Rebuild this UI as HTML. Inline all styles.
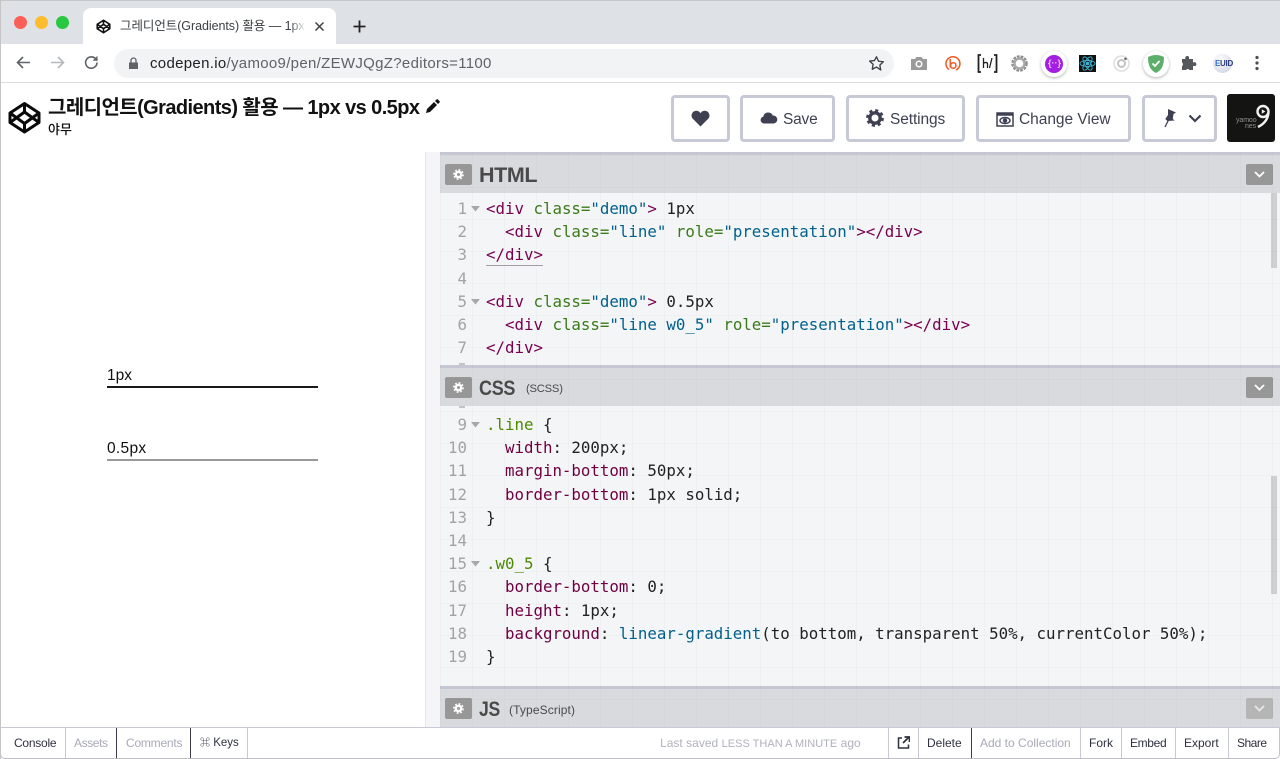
<!DOCTYPE html>
<html><head><meta charset="utf-8">
<style>
*{box-sizing:border-box}
html,body{margin:0;padding:0;width:1280px;height:759px;overflow:hidden;background:#fff;font-family:"Liberation Sans","Noto Sans CJK KR",sans-serif}
.a{position:absolute}
.t{position:absolute;white-space:nowrap}
.btn{position:absolute;top:95px;height:47px;border:3px solid #c7c9d6;border-radius:4px;background:#fff;color:#3f4152;font-size:15.5px;line-height:43px;white-space:nowrap;letter-spacing:-.2px}
.btn svg{position:absolute}
.code{position:absolute;font-family:"DejaVu Sans Mono",monospace;font-size:15.78px;line-height:23.2px;white-space:pre;color:#222}
.n{position:absolute;font-family:"DejaVu Sans Mono",monospace;font-size:15.78px;line-height:23.2px;color:#a3a3a3;text-align:right;width:28px;left:439px}
.tg{color:#7a004f}.at{color:#3a7a1a}.st{color:#00618c}.pr{color:#6f0040}.sel{color:#4d8a00}.fn{color:#00618c}
.eh{position:absolute;left:440px;width:840px;background:#d9dadd;border-top:3px solid #c5c7d4}
.cog{position:absolute;left:445px;width:27px;height:21px;background:#979797;border-radius:2px}
.cog svg{position:absolute;left:7px;top:4px}
.dd{position:absolute;left:1246px;width:27px;height:21px;background:#979797;border-radius:2px}
.ft{position:absolute;top:728px;height:30px;line-height:30px;font-size:12px;color:#2f3140;white-space:nowrap}
.sep{position:absolute;top:728px;height:30px;width:1px;background:#c7c9d6}
.lab{position:absolute;font-size:21.5px;font-weight:bold;color:#4a4a4a;letter-spacing:-.4px;white-space:nowrap;transform-origin:0 50%}
.sub{position:absolute;font-size:12px;color:#4a4a4a;white-space:nowrap}
</style></head><body>

<!-- Browser chrome -->
<div class="a" style="left:0;top:0;width:1280px;height:44px;background:#dee1e6;border-top:1px solid #c6c7ca"></div>
<div class="a" style="left:14px;top:16px;width:13px;height:13px;border-radius:50%;background:#fb5f57"></div>
<div class="a" style="left:35px;top:16px;width:13px;height:13px;border-radius:50%;background:#fdbc2e"></div>
<div class="a" style="left:56px;top:16px;width:13px;height:13px;border-radius:50%;background:#28c83f"></div>
<div class="a" style="left:83px;top:8px;width:253px;height:36px;background:#fff;border-radius:8px 8px 0 0"></div>
<svg class="a" style="left:96px;top:19px" width="15" height="15" viewBox="0 0 24 24" fill="none" stroke="#111" stroke-width="2.600" stroke-linejoin="round"><path d="M12 2 22 8.500v7L12 22 2 15.500v-7zM12 2v6.500M12 15.500V22M2 8.500l10 7 10-7M2 15.500l10-7 10 7"/></svg>
<div class="t" style="left:120px;top:18px;font-size:12.500px;line-height:17px;color:#3c4043;width:186px;overflow:hidden;letter-spacing:-.06px;-webkit-mask-image:linear-gradient(to right,#000 170px,transparent 186px)">그레디언트(Gradients) 활용 — 1px vs 0.5px</div>
<svg class="a" style="left:313px;top:20px" width="13" height="13" viewBox="0 0 13 13" stroke="#3c4043" stroke-width="1.500"><path d="M2.500 2.500l8 8M10.500 2.500l-8 8"/></svg>
<svg class="a" style="left:352px;top:19px" width="15" height="15" viewBox="0 0 15 15" stroke="#222" stroke-width="1.800"><path d="M7.500 1.500v12M1.500 7.500h12"/></svg>

<div class="a" style="left:0;top:44px;width:1280px;height:39px;background:#fff;border-bottom:1px solid #dadce0"></div>
<svg class="a" style="left:15px;top:54px" width="17" height="17" viewBox="0 0 17 17" fill="none" stroke="#5f6368" stroke-width="1.600"><path d="M15 8.500H2.500M8 3 2.500 8.500 8 14"/></svg>
<svg class="a" style="left:49px;top:54px" width="17" height="17" viewBox="0 0 17 17" fill="none" stroke="#b5b7ba" stroke-width="1.600"><path d="M2 8.500h12.500M9 3l5.500 5.500L9 14"/></svg>
<svg class="a" style="left:83px;top:54px" width="17" height="17" viewBox="0 0 17 17" fill="none" stroke="#5f6368" stroke-width="1.600"><path d="M14 8.500a5.700 5.700 0 1 1-1.700-4L14.500 6.500"/><path d="M14.500 1.800v4.900H9.600" fill="#5f6368" stroke="none"/></svg>
<div class="a" style="left:114px;top:49px;width:780px;height:29px;border-radius:15px;background:#f1f3f4"></div>
<svg class="a" style="left:128px;top:57px" width="11" height="13" viewBox="0 0 11 13"><path d="M1 5.500h9V12H1z" fill="#5f6368"/><path d="M3 5.500V3.500a2.500 2.500 0 0 1 5 0v2" fill="none" stroke="#5f6368" stroke-width="1.300"/></svg>
<div class="t" style="left:150px;top:55px;font-size:15px;line-height:18px;color:#202124;letter-spacing:.31px">codepen.io<span style="color:#5f6368">/yamoo9/pen/ZEWJQgZ?editors=1100</span></div>
<svg class="a" style="left:868px;top:55px" width="17" height="17" viewBox="0 0 24 24" fill="none" stroke="#3c4043" stroke-width="1.900" stroke-linejoin="round"><path d="M12 2.500l2.900 6.300 6.800.8-5 4.700 1.300 6.800L12 17l-6 3.100 1.300-6.800-5-4.700 6.800-.8z"/></svg>

<!-- extensions -->
<svg class="a" style="left:911px;top:56px" width="16" height="15" viewBox="0 0 16 15"><path d="M0 3h4l1.500-2h5L12 3h4v11H0z" fill="#9a9a9a"/><circle cx="8" cy="8" r="3.500" fill="#fff"/><circle cx="8" cy="8" r="2" fill="#9a9a9a"/></svg>
<svg class="a" style="left:944px;top:55px" width="17" height="17" viewBox="0 0 17 17" fill="none" stroke="#ec5a24" stroke-width="1.500"><path d="M5 14.500A7 7 0 1 1 12 15"/><path d="M6.300 4v8.500"/><circle cx="9.300" cy="10.500" r="2.700"/></svg>
<svg class="a" style="left:977px;top:54px" width="21" height="19" viewBox="0 0 21 19" fill="none" stroke="#222" stroke-width="1.800"><path d="M4 1H1.500v17H4M17 1h2.500v17H17"/><path d="M6.500 4v10M6.500 9.500c1-1.500 4-1.500 4 .5v4M15 4l-2.500 10" stroke-width="1.300"/></svg>
<svg class="a" style="left:1011px;top:55px" width="17" height="17" viewBox="0 0 17 17"><circle cx="8.500" cy="8.500" r="6.500" fill="none" stroke="#8d8d8d" stroke-width="3.500" stroke-dasharray="2.500 1"/><circle cx="8.500" cy="8.500" r="5" fill="none" stroke="#a9a9a9" stroke-width="2.400"/><circle cx="8.500" cy="8.500" r="2" fill="#fff"/></svg>
<div class="a" style="left:1041px;top:51px;width:26px;height:26px;border-radius:50%;background:#fff;box-shadow:0 1px 3px rgba(0,0,0,.3)"></div>
<div class="a" style="left:1045px;top:55px;width:18px;height:18px;border-radius:50%;background:#a31de2"></div>
<div class="t" style="left:1048px;top:57px;font:bold 9px/13px 'Liberation Sans',sans-serif;color:#e8c8f8">{··}</div>
<div class="a" style="left:1079px;top:55px;width:17px;height:17px;background:#111"></div>
<svg class="a" style="left:1079px;top:55px" width="17" height="17" viewBox="0 0 17 17" fill="none" stroke="#3fb6d8" stroke-width=".9"><ellipse cx="8.500" cy="8.500" rx="7.500" ry="3"/><ellipse cx="8.500" cy="8.500" rx="7.500" ry="3" transform="rotate(60 8.500 8.500)"/><ellipse cx="8.500" cy="8.500" rx="7.500" ry="3" transform="rotate(120 8.500 8.500)"/><circle cx="8.500" cy="8.500" r="1.300" fill="#3fb6d8"/></svg>
<svg class="a" style="left:1113px;top:55px" width="17" height="17" viewBox="0 0 17 17" fill="none"><circle cx="8.500" cy="8.500" r="7.500" stroke="#dedede" stroke-width="1.500"/><circle cx="8.500" cy="8.500" r="3.500" stroke="#c4c4c4" stroke-width="2"/><circle cx="12.500" cy="3.800" r="1.300" fill="#666"/></svg>
<div class="a" style="left:1143px;top:51px;width:26px;height:26px;border-radius:50%;background:#fff;box-shadow:0 1px 3px rgba(0,0,0,.3)"></div>
<svg class="a" style="left:1147px;top:54px" width="18" height="20" viewBox="0 0 18 20"><path d="M9 1C6 1 3 2 1 3c0 8 2 13 8 16 6-3 8-8 8-16C15 2 12 1 9 1z" fill="#5cae6a"/><path d="M5.500 9.500 8 12l4.500-5" fill="none" stroke="#fff" stroke-width="1.800"/></svg>
<svg class="a" style="left:1181px;top:55px" width="16" height="16" viewBox="0 0 16 16"><path d="M1 4h3.500a2 2 0 0 1 3.500-2v2h4v3.500a2 2 0 0 1 2.500 3.500H12v4H8.500a2 2 0 0 0-3.500 0H1v-4a2 2 0 0 0 0-3.500z" fill="#55585c"/></svg>
<div class="a" style="left:1213px;top:54px;width:19px;height:19px;border-radius:50%;background:radial-gradient(circle at 40% 30%,#fff,#c9cde0)"></div>
<div class="t" style="left:1215px;top:58px;font:bold 8px/11px 'Liberation Sans',sans-serif;color:#2b3a7a;letter-spacing:-.3px"><span style="color:#2d6fd0">E</span>UID</div>
<svg class="a" style="left:1255px;top:55px" width="4" height="16" viewBox="0 0 4 16" fill="#4a4d51"><circle cx="2" cy="2.500" r="1.600"/><circle cx="2" cy="8" r="1.600"/><circle cx="2" cy="13.500" r="1.600"/></svg>

<!-- CodePen header -->
<svg class="a" style="left:8px;top:101px" width="33" height="33" viewBox="0 0 33 33" fill="none" stroke="#0a0a0a" stroke-width="3" stroke-linejoin="round"><path d="M16.500 2.500 31 12v9.500L16.500 31 2 21.500V12zM16.500 2.500V11M16.500 22.500V31M2 12l14.500 10.500L31 12M2 21.500 16.500 11 31 21.500"/></svg>
<div class="t" style="left:48px;top:95px;font-size:20px;line-height:26px;font-weight:bold;color:#111;letter-spacing:-.58px">그레디언트(Gradients) 활용 — 1px vs 0.5px</div>
<svg class="a" style="left:425px;top:99px" width="15" height="15" viewBox="0 0 15 15" fill="#111"><path d="M1 14l1-4 7-7 3 3-7 7zM10 2l1.500-1.500a1 1 0 0 1 1.400 0l1.600 1.600a1 1 0 0 1 0 1.400L13 5z"/></svg>
<div class="t" style="left:48px;top:121px;font-size:13px;line-height:17px;font-weight:500;color:#111">야무</div>

<div class="btn" style="left:671px;width:59px"><svg style="left:17px;top:12px" width="19" height="17" viewBox="0 0 19 17" fill="#3f4152"><path d="M9.500 16.500 1.800 8.800A4.800 4.800 0 0 1 5.200 .8c1.800 0 3.300.9 4.300 2.400C10.500 1.700 12 .8 13.800 .8a4.800 4.800 0 0 1 3.400 8z"/></svg></div>
<div class="btn" style="left:740px;width:95px"><svg style="left:17px;top:13px" width="18" height="13" viewBox="0 0 18 13" fill="#3f4152"><path d="M4 12.500a3.500 3.500 0 0 1-.7-6.900A5 5 0 0 1 12.800 4.500a4 4 0 0 1 .9 8z"/></svg><span style="position:absolute;left:40px">Save</span></div>
<div class="btn" style="left:846px;width:119px"><svg style="left:17px;top:11px" width="18" height="18" viewBox="0 0 18 18"><circle cx="9" cy="9" r="5.200" fill="none" stroke="#3f4152" stroke-width="3.400"/><circle cx="9" cy="9" r="7.400" fill="none" stroke="#3f4152" stroke-width="3" stroke-dasharray="3 2.800"/></svg><span style="position:absolute;left:41px;letter-spacing:-.1px">Settings</span></div>
<div class="btn" style="left:976px;width:155px"><svg style="left:17px;top:14px" width="18" height="15" viewBox="0 0 18 15" fill="none" stroke="#3f4152" stroke-width="1.500"><path d="M1 1h16v13H1z"/><path d="M1 2.500h16" stroke-width="2.500"/><ellipse cx="9" cy="8.500" rx="5" ry="3"/><circle cx="9" cy="8.500" r="1.500" fill="#3f4152"/></svg><span style="position:absolute;left:40px;letter-spacing:-.03px">Change View</span></div>
<div class="btn" style="left:1142px;width:75px"><svg style="left:17px;top:10px" width="16" height="20" viewBox="0 0 16 20" fill="#3f4152"><path d="M6 1l8 3.500-2.500 1.500-.7 5 2 1.500-7.500.5-2-2L6 7z"/><path d="M6.500 12 3 19" stroke="#3f4152" stroke-width="1.300"/></svg><svg style="left:43px;top:16px" width="14" height="9" viewBox="0 0 14 9" fill="none" stroke="#3f4152" stroke-width="2.200"><path d="M1.500 1.500 7 7l5.500-5.500"/></svg></div>
<div class="a" style="left:1227px;top:94px;width:48px;height:48px;background:#141413;border-radius:3px"></div>
<svg class="a" style="left:1255px;top:103px" width="17" height="26" viewBox="0 0 17 26" fill="none" stroke="#f2f2f2" stroke-width="2.400"><circle cx="8" cy="8.500" r="5.500"/><path d="M13.500 9.500C13 16 9 21 3 24"/><path d="M6.800 6.200v4.600l3.600-2.300z" fill="#f2f2f2" stroke="none"/></svg>
<div class="t" style="left:1236px;top:118px;font:7px/6px 'Liberation Sans',sans-serif;color:#8f8f8f;letter-spacing:-.1px">yamoo<br><span style="margin-left:9px">nes</span></div>

<!-- Window edge / preview pane -->
<div class="a" style="left:0;top:0;width:1px;height:759px;background:#c5c5c5"></div>
<div class="a" style="left:425px;top:152px;width:15px;height:576px;background:#f5f5f7;border-left:1px solid #e6e6ea"></div>
<div class="t" style="left:107px;top:366px;font-size:15.500px;line-height:20px;color:#111">1px</div>
<div class="a" style="left:107px;top:386px;width:211px;height:1.500px;background:#1a1a1a"></div>
<div class="t" style="left:107px;top:439px;font-size:15.500px;line-height:20px;color:#111;letter-spacing:.3px">0.5px</div>
<div class="a" style="left:107px;top:459px;width:211px;height:2px;background:#999"></div>

<!-- HTML editor -->
<div class="a" style="left:440px;top:152px;width:840px;height:214px;background:#f4f5f7"></div>
<div class="eh" style="top:152px;height:41px"></div>
<div class="cog" style="top:164px"><svg width="13" height="13" viewBox="0 0 13 13"><circle cx="6.500" cy="6.500" r="2.700" fill="none" stroke="#fff" stroke-width="2.400"/><circle cx="6.500" cy="6.500" r="4.600" fill="none" stroke="#fff" stroke-width="1.600" stroke-dasharray="1.800 1.800"/></svg></div>
<div class="lab" style="left:479px;top:162px;line-height:27px">HTML</div>
<div class="dd" style="top:164px"><svg style="position:absolute;left:8px;top:7px" width="11" height="7" viewBox="0 0 11 7" fill="none" stroke="#fff" stroke-width="1.800"><path d="M1 1l4.500 4.500L10 1"/></svg></div>
<div class="a" style="left:1271px;top:193px;width:6px;height:75px;background:#cfcfcf"></div>

<div class="n" style="top:197px">1<br>2<br>3<br>4<br>5<br>6<br>7</div>
<svg class="a" style="left:471px;top:206px" width="9" height="6"><path d="M0 0h9L4.500 5.500z" fill="#a8a8a8"/></svg>
<svg class="a" style="left:471px;top:299px" width="9" height="6"><path d="M0 0h9L4.500 5.500z" fill="#a8a8a8"/></svg>
<div class="code" style="left:486px;top:197px"><span class="tg">&lt;div</span> <span class="at">class=</span><span class="st">"demo"</span><span class="tg">&gt;</span> 1px
  <span class="tg">&lt;div</span> <span class="at">class=</span><span class="st">"line"</span> <span class="at">role=</span><span class="st">"presentation"</span><span class="tg">&gt;&lt;/div&gt;</span>
<span class="tg">&lt;/div&gt;</span>

<span class="tg">&lt;div</span> <span class="at">class=</span><span class="st">"demo"</span><span class="tg">&gt;</span> 0.5px
  <span class="tg">&lt;div</span> <span class="at">class=</span><span class="st">"line w0_5"</span> <span class="at">role=</span><span class="st">"presentation"</span><span class="tg">&gt;&lt;/div&gt;</span>
<span class="tg">&lt;/div&gt;</span></div>
<div class="a" style="left:486px;top:265px;width:57px;height:1px;background:#a89aa3"></div>
<div class="a" style="left:459px;top:363px;width:6px;height:2px;background:#c4c4c4"></div>

<!-- CSS editor -->
<div class="a" style="left:440px;top:365px;width:840px;height:323px;background:#f4f5f7"></div>
<div class="eh" style="top:365px;height:41px"></div>
<div class="cog" style="top:377px"><svg width="13" height="13" viewBox="0 0 13 13"><circle cx="6.500" cy="6.500" r="2.700" fill="none" stroke="#fff" stroke-width="2.400"/><circle cx="6.500" cy="6.500" r="4.600" fill="none" stroke="#fff" stroke-width="1.600" stroke-dasharray="1.800 1.800"/></svg></div>
<div class="lab" style="left:479px;top:375px;line-height:27px;transform:scaleX(.84)">CSS</div>
<div class="sub" style="left:526px;top:381px;line-height:16px;font-size:11.200px;letter-spacing:-.2px">(SCSS)</div>
<div class="dd" style="top:377px"><svg style="position:absolute;left:8px;top:7px" width="11" height="7" viewBox="0 0 11 7" fill="none" stroke="#fff" stroke-width="1.800"><path d="M1 1l4.500 4.500L10 1"/></svg></div>
<div class="a" style="left:1271px;top:476px;width:6px;height:118px;background:#cfcfcf"></div>
<div class="a" style="left:459px;top:406px;width:6px;height:2px;background:#c4c4c4"></div>

<div class="n" style="top:413px">9<br>10<br>11<br>12<br>13<br>14<br>15<br>16<br>17<br>18<br>19</div>
<svg class="a" style="left:471px;top:422px" width="9" height="6"><path d="M0 0h9L4.500 5.500z" fill="#a8a8a8"/></svg>
<svg class="a" style="left:471px;top:561px" width="9" height="6"><path d="M0 0h9L4.500 5.500z" fill="#a8a8a8"/></svg>
<div class="code" style="left:486px;top:413px"><span class="sel">.line</span> {
  <span class="pr">width</span>: 200px;
  <span class="pr">margin-bottom</span>: 50px;
  <span class="pr">border-bottom</span>: 1px solid;
}

<span class="sel">.w0_5</span> {
  <span class="pr">border-bottom</span>: 0;
  <span class="pr">height</span>: 1px;
  <span class="pr">background</span>: <span class="fn">linear-gradient</span>(to bottom, transparent 50%, currentColor 50%);
}</div>

<!-- JS editor -->
<div class="eh" style="top:686px;height:42px"></div>
<div class="cog" style="top:698px"><svg width="13" height="13" viewBox="0 0 13 13"><circle cx="6.500" cy="6.500" r="2.700" fill="none" stroke="#fff" stroke-width="2.400"/><circle cx="6.500" cy="6.500" r="4.600" fill="none" stroke="#fff" stroke-width="1.600" stroke-dasharray="1.800 1.800"/></svg></div>
<div class="lab" style="left:479px;top:696px;line-height:27px;transform:scaleX(.82)">JS</div>
<div class="sub" style="left:509px;top:702px;line-height:16px;letter-spacing:.12px">(TypeScript)</div>
<div class="dd" style="top:698px;background:#b5b5b5"><svg style="position:absolute;left:8px;top:7px" width="11" height="7" viewBox="0 0 11 7" fill="none" stroke="#e8e8e8" stroke-width="1.800"><path d="M1 1l4.500 4.500L10 1"/></svg></div>

<!-- faint editor grid -->
<div class="a" style="left:440px;top:155px;width:840px;height:573px;background-image:linear-gradient(to right,rgba(0,0,0,.018) 1px,transparent 1px),linear-gradient(to bottom,rgba(0,0,0,.018) 1px,transparent 1px);background-size:32px 32px"></div>

<!-- Footer -->
<div class="a" style="left:0;top:727px;width:1280px;height:32px;background:#fff;border-top:1px solid #c7c9d6;border-bottom:1px solid #bdbdc2;border-left:1px solid #c5c5c5;border-right:1px solid #c5c5c5;border-radius:0 0 5px 5px"></div>
<div class="ft" style="left:14px;letter-spacing:-.25px">Console</div>
<div class="sep" style="left:65px"></div>
<div class="ft" style="left:74px;color:#a8aab6;letter-spacing:-.4px">Assets</div>
<div class="sep" style="left:116px;background:#3a3c4a"></div>
<div class="ft" style="left:126px;color:#a8aab6;letter-spacing:-.22px">Comments</div>
<div class="sep" style="left:190px;background:#3a3c4a"></div>
<div class="ft" style="left:200px;font-size:11.500px"><span style="font-size:10px">⌘</span> Keys</div>
<div class="sep" style="left:247px"></div>
<div class="ft" style="left:660px;color:#b0b2bc;letter-spacing:.02px">Last saved <span style="font-size:11px">LESS THAN A MINUTE</span> ago</div>
<div class="sep" style="left:888px"></div>
<svg class="a" style="left:897px;top:736px" width="13" height="13" viewBox="0 0 13 13" fill="none" stroke="#2f3140" stroke-width="1.500"><path d="M5 2H1.500v10h10V8.500"/><path d="M6 7l5.500-5.500M7.500 1h5v5" stroke-width="1.700"/></svg>
<div class="sep" style="left:918px"></div>
<div class="ft" style="left:927px">Delete</div>
<div class="sep" style="left:971px;background:#3a3c4a"></div>
<div class="ft" style="left:980px;color:#a8aab6">Add to Collection</div>
<div class="sep" style="left:1080px"></div>
<div class="ft" style="left:1089px">Fork</div>
<div class="sep" style="left:1121px"></div>
<div class="ft" style="left:1130px;letter-spacing:-.35px">Embed</div>
<div class="sep" style="left:1175px"></div>
<div class="ft" style="left:1184px">Export</div>
<div class="sep" style="left:1228px"></div>
<div class="ft" style="left:1237px;letter-spacing:-.5px">Share</div>
</body></html>
